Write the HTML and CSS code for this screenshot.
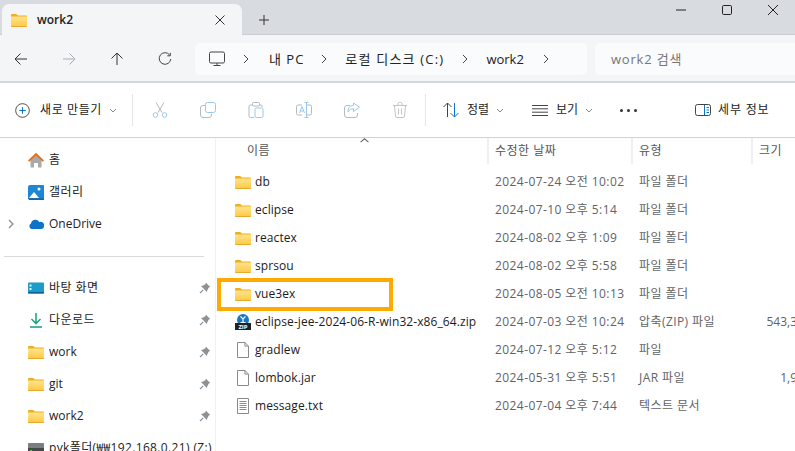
FILE: index.html
```html
<!DOCTYPE html>
<html lang="ko">
<head>
<meta charset="utf-8">
<title>work2</title>
<link rel="stylesheet" href="styles.css">
</head>
<body>
<svg class="defs" width="0" height="0" aria-hidden="true">
  <defs>
    <linearGradient id="fg" x1="0" y1="0" x2="0" y2="1"><stop offset="0" stop-color="#ffe48c"/><stop offset="1" stop-color="#fcc844"/></linearGradient>
    <symbol id="folder" viewBox="0 0 16 14">
      <path d="M0 2a1 1 0 0 1 1-1h4.200l1.800 1.600H15a1 1 0 0 1 1 1V6H0z" fill="#f2ad1c"/>
      <path d="M0 3.600h16v9.200a1 1 0 0 1-1 1H1a1 1 0 0 1-1-1z" fill="url(#fg)"/>
      <path d="M0 13h16v.1a.8.8 0 0 1-.8.8H.8A.8.8 0 0 1 0 13z" fill="#eaa92a"/>
    </symbol>
    <symbol id="pin" viewBox="0 0 12 12">
      <path d="M7 .8 11.200 5 9.800 5.600 8.200 8.400 8 10 2 4l1.600-.2 2.800-1.600z" fill="#8b9298"/>
      <path d="M4.200 7.800 1 11" stroke="#8b9298" stroke-width="1.200"/>
    </symbol>
    <symbol id="doc" viewBox="0 0 14 16">
      <path d="M1.500.5h7.400l3.600 3.600v11.400h-11z" fill="#fff" stroke="#8a8a8a"/>
      <path d="M8.900.5v3.600h3.600" fill="none" stroke="#8a8a8a"/>
    </symbol>
  </defs>
</svg>

<div class="app">
  <header class="titlebar">
    <div class="tab">
      <svg class="ico16 tab-ico"><use href="#folder"/></svg>
      <span class="tab-label">work2</span>
      <svg class="tab-x" viewBox="0 0 10 10"><path d="M.5.5l9 9M9.500.5l-9 9" stroke="#333" fill="none"/></svg>
    </div>
    <svg class="tab-plus" viewBox="0 0 10 10"><path d="M5 0v10M0 5h10" stroke="#333" fill="none"/></svg>
    <div class="winctl">
      <svg class="win-min" viewBox="0 0 10 10"><path d="M0 5h10" stroke="#222" fill="none"/></svg>
      <svg class="win-max" viewBox="0 0 10 10"><rect x=".5" y=".5" width="9" height="9" rx="1.200" stroke="#222" fill="none"/></svg>
      <svg class="win-close" viewBox="0 0 10 10"><path d="M0 0l10 10M10 0L0 10" stroke="#222" fill="none"/></svg>
    </div>
  </header>

  <nav class="navbar">
    <svg class="nav-btn" viewBox="0 0 14 14"><path d="M13 7H1M6.500 1.500 1 7l5.500 5.500" stroke="#333" fill="none"/></svg>
    <svg class="nav-btn" viewBox="0 0 14 14"><path d="M1 7h12M7.500 1.500 13 7l-5.500 5.500" stroke="#a9adb1" fill="none"/></svg>
    <svg class="nav-btn" viewBox="0 0 14 14"><path d="M7 13V1M1.500 6.500 7 1l5.500 5.500" stroke="#333" fill="none"/></svg>
    <svg class="nav-btn" viewBox="0 0 14 14"><path d="M11.500 2.800A5.800 5.800 0 1 0 12.800 7M12.300.8v3h-3" stroke="#444" fill="none"/></svg>
    <div class="address">
      <svg class="pc" viewBox="0 0 16 16"><rect x=".5" y="1" width="15" height="11" rx="1.500" fill="none" stroke="#444"/><path d="M8 12v2.500M4.500 14.500h7" stroke="#444"/></svg>
      <svg class="crumb-c crumb-c1" viewBox="0 0 6 10"><path d="M1 1l4 4-4 4" stroke="#444" fill="none"/></svg>
      <span class="crumb crumb-pc">내 PC</span>
      <svg class="crumb-c crumb-c2" viewBox="0 0 6 10"><path d="M1 1l4 4-4 4" stroke="#444" fill="none"/></svg>
      <span class="crumb crumb-disk">로컬 디스크 (C:)</span>
      <svg class="crumb-c crumb-c3" viewBox="0 0 6 10"><path d="M1 1l4 4-4 4" stroke="#444" fill="none"/></svg>
      <span class="crumb">work2</span>
      <svg class="crumb-c crumb-c4" viewBox="0 0 6 10"><path d="M1 1l4 4-4 4" stroke="#444" fill="none"/></svg>
    </div>
    <div class="search">work2 검색</div>
  </nav>

  <div class="toolbar">
    <svg class="tb-new" viewBox="0 0 16 16"><circle cx="8" cy="8" r="7.300" fill="none" stroke="#444"/><path d="M8 4.500v7M4.500 8h7" stroke="#0a74cc" stroke-width="1.200"/></svg>
    <span class="tb-label tb-newlabel">새로 만들기</span>
    <svg class="tb-chev" viewBox="0 0 8 5"><path d="M1 1l3 3 3-3" stroke="#888" fill="none"/></svg>
    <span class="tb-sep tb-sep1"></span>
    <svg class="tb-ico tb-first" viewBox="0 0 16 16"><path d="M4 .5l6 10M12 .5l-6 10" stroke="#b4babf" fill="none"/><circle cx="3.500" cy="13" r="2.300" fill="none" stroke="#9cc7ea"/><circle cx="12.500" cy="13" r="2.300" fill="none" stroke="#9cc7ea"/></svg>
    <svg class="tb-ico" viewBox="0 0 16 16"><rect x="5.500" y=".5" width="10" height="10" rx="2" fill="none" stroke="#9cc7ea"/><path d="M5 3.500H3A2.500 2.500 0 0 0 .5 6v7A2.500 2.500 0 0 0 3 15.500h6a2.500 2.500 0 0 0 2.500-2.500v-1" fill="none" stroke="#b4babf"/></svg>
    <svg class="tb-ico" viewBox="0 0 16 16"><path d="M4.500 3H2.500A1.500 1.500 0 0 0 1 4.500v9.500A1.500 1.500 0 0 0 2.500 15.500H6M11.500 3H13a1 1 0 0 1 1 1v1" fill="none" stroke="#b4babf"/><rect x="4.500" y=".5" width="7" height="3.500" rx="1" fill="none" stroke="#b4babf"/><rect x="7" y="6" width="8" height="9.500" rx="1.500" fill="none" stroke="#9cc7ea"/></svg>
    <svg class="tb-ico" viewBox="0 0 16 16"><path d="M6 3H2a1.500 1.500 0 0 0-1.500 1.500v7A1.500 1.500 0 0 0 2 13h4M11 3h3a1.500 1.500 0 0 1 1.500 1.500v7A1.500 1.500 0 0 1 14 13h-3" fill="none" stroke="#b4babf"/><path d="M10.500 0v16M8.500.5h4M8.500 15.500h4" fill="none" stroke="#9cc7ea"/><path d="M3.500 11 6 4.500 8.500 11M4.300 9h3.400" fill="none" stroke="#9cc7ea"/></svg>
    <svg class="tb-ico" viewBox="0 0 16 16"><path d="M6 3.500H3A2.500 2.500 0 0 0 .5 6v7A2.500 2.500 0 0 0 3 15.500h8a2.500 2.500 0 0 0 2.500-2.500v-2" fill="none" stroke="#b4babf"/><path d="M9.500 1v2.500C6 3.500 4 5.500 4 10c1.500-2.500 3-3.200 5.500-3.200V9.500l6-4.300z" fill="none" stroke="#9cc7ea"/></svg>
    <svg class="tb-ico" viewBox="0 0 16 16"><path d="M1 3.500h14M6 3.500V2a1.500 1.500 0 0 1 1.500-1.500h1A1.500 1.500 0 0 1 10 2v1.500M2.500 3.500l1 10.500a1.500 1.500 0 0 0 1.500 1.500h6a1.500 1.500 0 0 0 1.500-1.500l1-10.500M6.500 6.500v6M9.500 6.500v6" fill="none" stroke="#c0c5c9"/></svg>
    <span class="tb-sep tb-sep2"></span>
    <svg class="tb-sort" viewBox="0 0 16 16"><path d="M4.500 15V1M.5 5l4-4 4 4" fill="none" stroke="#444"/><path d="M11.500 1v14M7.500 11l4 4 4-4" fill="none" stroke="#0a74cc"/></svg>
    <span class="tb-label tb-sortlabel">정렬</span>
    <svg class="tb-chev" viewBox="0 0 8 5"><path d="M1 1l3 3 3-3" stroke="#888" fill="none"/></svg>
    <svg class="tb-view" viewBox="0 0 16 11"><path d="M0 .5h16M0 3.800h16M0 7.200h16M0 10.500h16" stroke="#444" fill="none"/></svg>
    <span class="tb-label tb-viewlabel">보기</span>
    <svg class="tb-chev" viewBox="0 0 8 5"><path d="M1 1l3 3 3-3" stroke="#888" fill="none"/></svg>
    <span class="tb-dots"><i></i><i></i><i></i></span>
    <svg class="tb-detail" viewBox="0 0 16 12"><rect x=".5" y=".5" width="15" height="11" rx="2" fill="none" stroke="#444"/><path d="M9.500 1v10" stroke="#0a74cc"/><path d="M11.500 3.500h2.500M11.500 6h2.500M11.500 8.500h2.500" stroke="#0a74cc"/></svg>
    <span class="tb-label tb-detaillabel">세부 정보</span>
  </div>

  <main class="body">
    <aside class="side">
      <div class="side-row">
        <svg class="side-ico" viewBox="0 0 16 16"><path d="M2.500 8 8 3l5.500 5v7.500H10v-4.500H6v4.500H2.500z" fill="#a9a9a9"/><path d="M0 8.500 8 .8l8 7.700-1.300 1.200L8 3.400 1.300 9.700z" fill="#e0701e"/></svg>
        <span class="side-name">홈</span>
      </div>
      <div class="side-row">
        <svg class="side-ico" viewBox="0 0 16 16"><path d="M2 1h13a1 1 0 0 1 1 1v12a1 1 0 0 1-1 1H1a1 1 0 0 1-1-1V3a2 2 0 0 1 2-2z" fill="#1f86d6"/><circle cx="11" cy="5" r="1.500" fill="#fff"/><path d="M1 14 6 8l5 6z" fill="#fff"/><path d="M0 14.200h16V16H1z" fill="#1666aa"/></svg>
        <span class="side-name">갤러리</span>
      </div>
      <div class="side-row">
        <svg class="side-chev" viewBox="0 0 6 10"><path d="M1 1l4 4-4 4" stroke="#8a8a8a" stroke-width="1.300" fill="none"/></svg>
        <svg class="side-ico" viewBox="0 0 16 11"><path d="M3.500 10.500A3 3 0 0 1 3 5a4.500 4.500 0 0 1 8.300-1.500A3.500 3.500 0 0 1 16 7.500a3 3 0 0 1-3 3z" fill="#0f72c9"/></svg>
        <span>OneDrive</span>
      </div>
      <hr class="side-sep">
      <div class="side-row">
        <svg class="side-ico" viewBox="0 0 16 12"><rect y=".5" width="16" height="11" rx="1" fill="#1d9bc9"/><rect y="10" width="16" height="1.500" fill="#0e5f96"/><rect x="1.500" y="2.500" width="2" height="2" fill="#e6f6fb"/><rect x="1.500" y="6" width="2" height="2" fill="#e6f6fb"/></svg>
        <span class="side-name">바탕 화면</span>
        <svg class="pin"><use href="#pin"/></svg>
      </div>
      <div class="side-row">
        <svg class="side-ico" viewBox="0 0 16 16"><path d="M8 1v10M3.500 7 8 11.500 12.500 7" fill="none" stroke="#21a77f" stroke-width="1.600"/><path d="M2 15h12" stroke="#21a77f" stroke-width="1.600"/></svg>
        <span class="side-name">다운로드</span>
        <svg class="pin"><use href="#pin"/></svg>
      </div>
      <div class="side-row">
        <svg class="side-ico"><use href="#folder"/></svg>
        <span>work</span>
        <svg class="pin"><use href="#pin"/></svg>
      </div>
      <div class="side-row">
        <svg class="side-ico"><use href="#folder"/></svg>
        <span>git</span>
        <svg class="pin"><use href="#pin"/></svg>
      </div>
      <div class="side-row">
        <svg class="side-ico"><use href="#folder"/></svg>
        <span>work2</span>
        <svg class="pin"><use href="#pin"/></svg>
      </div>
      <div class="side-row">
        <svg class="side-ico" viewBox="0 0 16 12"><rect y="1" width="16" height="10" rx="1" fill="#7b7f82"/><rect y="6" width="16" height="5" fill="#45484a"/><rect x="2" y="8" width="2" height="1" fill="#4ddb5a"/></svg>
        <span class="side-net">pyk폴더(₩₩192.168.0.21) (Z:)</span>
      </div>
    </aside>

    <section class="list">
      <div class="list-head">
        <span class="col-h col-name">이름</span>
        <span class="col-h col-date">수정한 날짜</span>
        <span class="col-h col-type">유형</span>
        <span class="col-h col-size">크기</span>
      </div>
      <svg class="sort-caret" viewBox="0 0 8 4"><path d="M.5 3.500 4 .5l3.500 3" stroke="#666" fill="none"/></svg>

      <div class="row"><svg class="f-ico"><use href="#folder"/></svg><span class="f-name">db</span><span class="f-meta">2024-07-24 오전 10:02</span><span class="f-meta">파일 폴더</span><span class="f-size"></span></div>
      <div class="row"><svg class="f-ico"><use href="#folder"/></svg><span class="f-name">eclipse</span><span class="f-meta">2024-07-10 오후 5:14</span><span class="f-meta">파일 폴더</span><span class="f-size"></span></div>
      <div class="row"><svg class="f-ico"><use href="#folder"/></svg><span class="f-name">reactex</span><span class="f-meta">2024-08-02 오후 1:09</span><span class="f-meta">파일 폴더</span><span class="f-size"></span></div>
      <div class="row"><svg class="f-ico"><use href="#folder"/></svg><span class="f-name">sprsou</span><span class="f-meta">2024-08-02 오후 5:58</span><span class="f-meta">파일 폴더</span><span class="f-size"></span></div>
      <div class="row"><svg class="f-ico"><use href="#folder"/></svg><span class="f-name">vue3ex</span><span class="f-meta">2024-08-05 오전 10:13</span><span class="f-meta">파일 폴더</span><span class="f-size"></span></div>
      <div class="row">
        <svg class="f-ico" viewBox="0 0 16 16"><circle cx="8" cy="6" r="6" fill="#1677c9"/><path d="M5.500 2.500 8 5l2.500-2.500M5.500 8.500h5M8 5v3" stroke="#fff" stroke-width="1.200" fill="none"/><rect y="9" width="16" height="7" fill="#222"/><text x="8" y="15" class="zip-text">ZIP</text></svg>
        <span class="f-name">eclipse-jee-2024-06-R-win32-x86_64.zip</span><span class="f-meta">2024-07-03 오전 10:24</span><span class="f-meta">압축(ZIP) 파일</span><span class="f-size">543,342 KB</span>
      </div>
      <div class="row"><svg class="f-ico"><use href="#doc"/></svg><span class="f-name">gradlew</span><span class="f-meta">2024-07-12 오후 5:12</span><span class="f-meta">파일</span><span class="f-size"></span></div>
      <div class="row"><svg class="f-ico"><use href="#doc"/></svg><span class="f-name">lombok.jar</span><span class="f-meta">2024-05-31 오후 5:51</span><span class="f-meta">JAR 파일</span><span class="f-size">1,934 KB</span></div>
      <div class="row">
        <svg class="f-ico" viewBox="0 0 14 16"><path d="M1.500.5h11v15h-11z" fill="#fff" stroke="#8a8a8a"/><path d="M3.500 3.500h7M3.500 5.500h7M3.500 7.500h7M3.500 9.500h7M3.500 11.500h7" stroke="#8a8a8a"/></svg>
        <span class="f-name">message.txt</span><span class="f-meta">2024-07-04 오후 7:44</span><span class="f-meta">텍스트 문서</span><span class="f-size"></span>
      </div>
      <div class="highlight"></div>
    </section>
  </main>
</div>
</body>
</html>
```
FILE: styles.css
```css
* { box-sizing: border-box; }
html, body { margin: 0; height: 100%; overflow: hidden; background: #fff; }
body { font: 12px/16px "Open Sans", "Noto Sans CJK KR", sans-serif; color: #1c1c1c; }
.defs { position: absolute; }
.app { width: 795px; height: 451px; display: flex; flex-direction: column; overflow: hidden; }

.titlebar { height: 35px; flex: none; background: #d8dce0; display: flex; align-items: flex-start; padding: 4px 0 0 2px; border-bottom: 1px solid #c9cdd1; }
.tab { width: 240px; height: 31px; background: #f3f5f7; border-radius: 7px 7px 0 0; display: flex; align-items: center; padding: 0 0 0 9px; }
.tab-ico { width: 16px; height: 14px; }
.tab-label { margin-left: 10px; font-size: 12px; font-weight: 600; color: #222; flex: 1; }
.tab-x { width: 10px; height: 10px; margin-right: 17px; }
.tab-plus { width: 10px; height: 10px; margin: 11px 0 0 17px; }
.winctl { margin-left: auto; display: flex; align-items: center; padding: 1px 17px 0 0; }
.winctl svg { width: 10px; height: 10px; }
.win-min { margin-right: 36px; }
.win-max { margin-right: 36px; }

.navbar { height: 48px; flex: none; background: #f3f5f7; border-bottom: 2px solid #d5d8da; display: flex; align-items: center; padding: 1px 0 0 14px; }
.nav-btn { width: 14px; height: 14px; margin-right: 34px; flex: none; }
.nav-btn:nth-of-type(4) { margin-right: 23px; }
.address { width: 392px; height: 32px; background: #fafbfc; border-radius: 5px; display: flex; align-items: center; padding-left: 14px; font-size: 13px; color: #222; flex: none; }
.pc { width: 16px; height: 16px; flex: none; }
.crumb-c { width: 6px; height: 10px; flex: none; }
.crumb-pc { letter-spacing: 1px; }
.crumb-disk { letter-spacing: 1.2px; }
.crumb-c1 { margin: 0 20px 0 18px; }
.crumb-c2 { margin: 0 18px 0 17px; }
.crumb-c3 { margin: 0 18px 0 18px; }
.crumb-c4 { margin-left: 19px; }
.search { margin-left: 8px; flex: 1; height: 32px; background: #fafbfc; border-radius: 5px 0 0 5px; padding-left: 16px; line-height: 32px; font-size: 13px; letter-spacing: .8px; color: #767676; }

.toolbar { height: 55px; flex: none; background: #fff; border-bottom: 1px solid #cfd3d6; display: flex; align-items: center; padding-left: 15px; }
.tb-new { width: 15px; height: 15px; flex: none; }
.tb-newlabel { margin-left: 10px; letter-spacing: .6px; }
.tb-label { white-space: nowrap; }
.tb-chev { width: 8px; height: 5px; margin-left: 7px; flex: none; }
.tb-sep { width: 1px; height: 32px; background: #e4e6e8; flex: none; }
.tb-sep1 { margin-left: 15px; }
.tb-sep2 { margin-left: 17px; }
.tb-ico { width: 16px; height: 16px; margin-left: 32px; flex: none; }
.tb-first { margin-left: 19px; }
.tb-sort { width: 16px; height: 16px; margin-left: 17px; flex: none; }
.tb-sortlabel { margin-left: 8px; }
.tb-view { width: 16px; height: 11px; margin-left: 28px; flex: none; }
.tb-viewlabel { margin-left: 8px; }
.tb-dots { display: flex; gap: 4px; margin-left: 27px; width: 16px; flex: none; }
.tb-dots i { width: 3px; height: 3px; border-radius: 50%; background: #333; flex: none; }
.tb-detail { width: 16px; height: 12px; margin-left: 59px; margin-right: 7px; flex: none; }
.tb-detaillabel { letter-spacing: .8px; }

.body { flex: 1; display: flex; min-height: 0; }
.side { width: 216px; flex: none; border-right: 1px solid #f0f1f2; padding: 6px 0 0; overflow: hidden; }
.side-row { height: 32px; display: flex; align-items: center; padding-left: 28px; position: relative; white-space: nowrap; color: #222; }
.side-ico { width: 16px; height: 16px; flex: none; margin-right: 5px; }
.side-chev { position: absolute; left: 8px; top: 11px; width: 6px; height: 10px; }
.side-name { letter-spacing: .45px; }
.side-net { letter-spacing: .36px; }
.pin { width: 12px; height: 12px; position: absolute; left: 199px; top: 10px; }
.side-sep { border: 0; border-top: 1px solid #d9d9d9; margin: 16px 11px 15px 4px; }

.list { flex: 1; position: relative; padding-left: 19px; min-width: 0; overflow: hidden; }
.list-head { display: grid; grid-template-columns: 254px 144px 120px 60px; height: 30px; color: #555; }
.col-h { padding-left: 6px; height: 26px; line-height: 26px; border-right: 2px solid #eef0f1; color: #555; letter-spacing: .5px; }
.col-name { padding-left: 12px; }
.col-size { border-right: 0; }
.sort-caret { position: absolute; left: 144px; top: 0; width: 9px; height: 5px; }
.row { display: grid; grid-template-columns: 20px 240px 144px 114px 76px; height: 28px; align-items: center; white-space: nowrap; }
.f-ico { width: 16px; height: 16px; }
.f-name { color: #1c1c1c; letter-spacing: .08px; }
.f-meta { color: #5f6368; letter-spacing: .42px; }
.f-size { color: #5f6368; text-align: right; }
.zip-text { font: 700 6px "Open Sans", sans-serif; fill: #fff; text-anchor: middle; }
.highlight { position: absolute; left: 1px; top: 140px; width: 176px; height: 33px; border: 4px solid #ffaa00; pointer-events: none; }
```
